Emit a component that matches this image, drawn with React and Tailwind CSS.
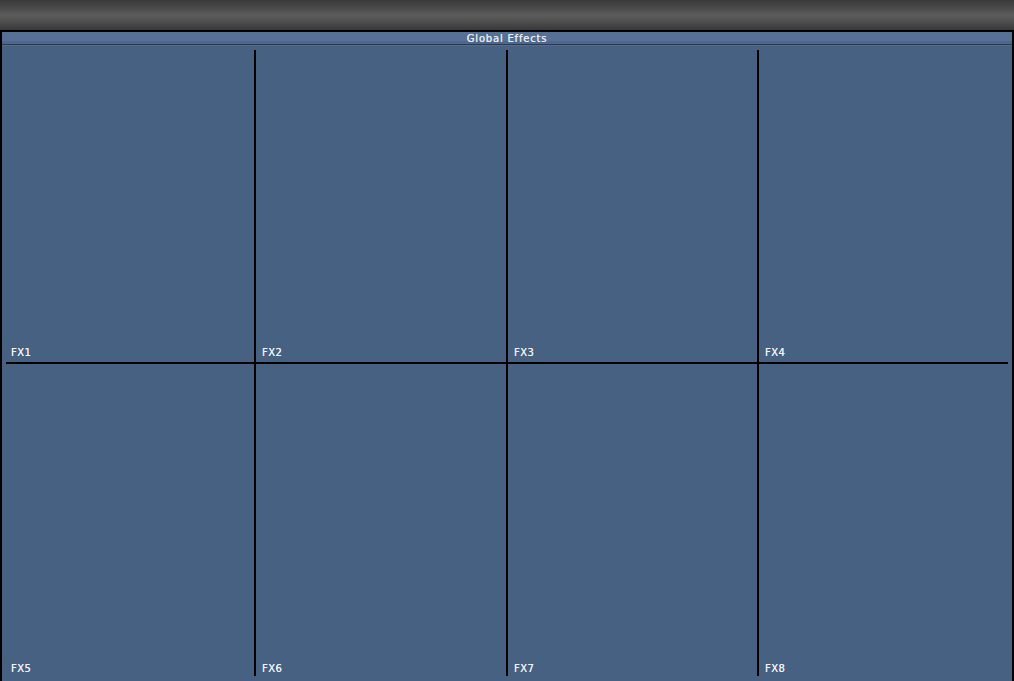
export default function App() {
  const rows = [
    ["FX1", "FX2", "FX3", "FX4"],
    ["FX5", "FX6", "FX7", "FX8"],
  ];
  return (
    <div className="w-[1014px] h-[681px] bg-black overflow-hidden flex flex-col font-['DejaVu_Sans',sans-serif]">
      <div className="h-[30px] shrink-0 bg-[linear-gradient(to_bottom,#3a3a3a_0%,#4c4c4c_30%,#5c5c5c_50%,#4c4c4c_75%,#383838_100%)]" />
      <div className="mt-[2px] mx-[2px] flex-1 flex flex-col bg-[#476183]">
        <div className="h-[13px] shrink-0 flex flex-col">
          <div className="h-[9px] bg-[#577196]" />
          <div className="h-[3px] bg-[#4e688d]" />
          <div className="h-[1px] bg-[#2b3a50]" />
        </div>
        <div className="h-0 relative">
          <div className="absolute left-0 right-0 top-[-13px] text-center text-[10px] leading-[14px] tracking-[0.8px] text-[#e8ebf0] [text-shadow:0_0_0.4px_#e8ebf0]">
            Global Effects
          </div>
        </div>
        <div className="h-[1px] bg-[#546e93]" />
        <div className="px-[4px] pt-[4px]">
          <div className="grid grid-cols-[250px_252px_251px_249px] grid-rows-[314px_312px]">
            {rows.map((row, ri) =>
              row.map((label, ci) => (
                <div
                  key={label}
                  className={
                    "flex items-end text-[10px] leading-[12px] tracking-[0.5px] text-[#f0f2f5] [text-shadow:0_0_0.4px_#f0f2f5] " +
                    (ci === 0 ? "pl-[5px] " : "pl-[6px] ") +
                    (ci < 3 ? "border-r-2 border-black " : "") +
                    (ri === 0 ? "pb-[3px] border-b-2 border-black" : "pb-[1px]")
                  }
                >
                  {label}
                </div>
              ))
            )}
          </div>
        </div>
      </div>
    </div>
  );
}
